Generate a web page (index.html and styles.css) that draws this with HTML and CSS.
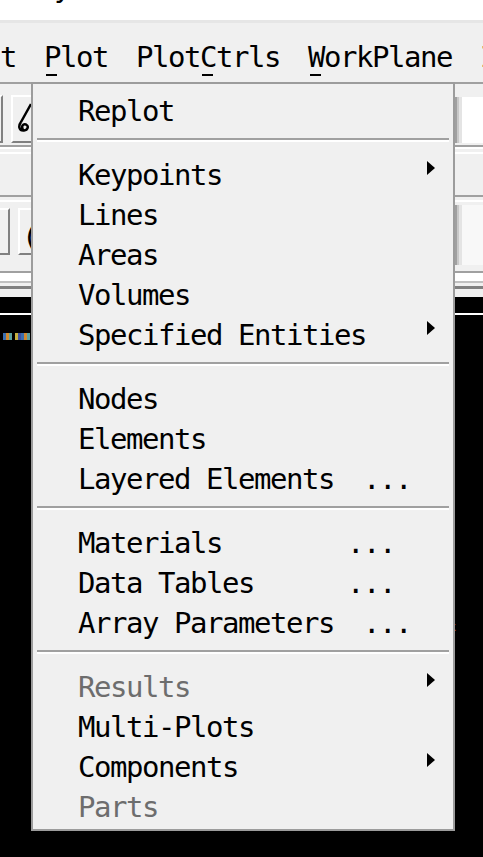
FILE: index.html
```html
<!DOCTYPE html>
<html>
<head>
<meta charset="utf-8">
<link rel="stylesheet" href="styles.css">
</head>
<body>
<div class="title"><div class="title-text">Utility</div></div>
<div class="band"></div>
<div class="menubar">
  <span class="mitem">t</span>
  <span class="mitem"><span class="ul">P</span>lot</span>
  <span class="mitem">Plot<span class="ul">C</span>trls</span>
  <span class="mitem"><span class="ul">W</span>orkPlane</span>
  <span class="mitem">I</span>
</div>
<div class="tb tb1">
  <div class="tb-left">
    <div class="btn"></div>
    <div class="btn btn-icon">
      <svg width="16" height="30" viewBox="0 0 16 30"><path d="M13 1 L3 19 M3 19 C0 23 1 28 6 27.5 C10 27 11 23 8 21.5 C5 20.5 3 23 5 27" stroke="#000" stroke-width="2.5" fill="none"/></svg>
    </div>
  </div>
  <div class="field"></div>
</div>
<div class="stripes1"></div>
<div class="tb tb2">
  <div class="tb-left tb-left2">
    <div class="btn"></div>
    <div class="btn"><span class="paren">(</span></div>
  </div>
  <div class="field field2"></div>
</div>
<div class="stripes2"></div>
<div class="canvas">
  <div class="wline"></div>
  <div class="legend"></div>
  <span class="mark">x</span>
</div>

<div class="menu">
  <div class="item">Replot</div>
  <div class="sep"></div>
  <div class="item">Keypoints<span class="arrow"></span></div>
  <div class="item">Lines</div>
  <div class="item">Areas</div>
  <div class="item">Volumes</div>
  <div class="item">Specified Entities<span class="arrow"></span></div>
  <div class="sep"></div>
  <div class="item">Nodes</div>
  <div class="item">Elements</div>
  <div class="item">Layered Elements  <span class="dots">...</span></div>
  <div class="sep"></div>
  <div class="item">Materials        <span class="dots">...</span></div>
  <div class="item">Data Tables      <span class="dots">...</span></div>
  <div class="item">Array Parameters  <span class="dots">...</span></div>
  <div class="sep"></div>
  <div class="item dis">Results<span class="arrow"></span></div>
  <div class="item">Multi-Plots</div>
  <div class="item">Components<span class="arrow"></span></div>
  <div class="item dis">Parts</div>
</div>
</body>
</html>
```

FILE: styles.css
```css
html, body {
  margin: 0;
}
body {
  width: 483px;
  height: 857px;
  overflow: hidden;
  position: relative;
  background: #f0f0f0;
  font-family: "DejaVu Sans Mono", "Liberation Mono", monospace;
  font-size: 29px;
  letter-spacing: -1.46px;
  color: #000;
}

.title {
  height: 20px;
  background: #fff;
  overflow: hidden;
}
.title-text {
  margin-top: -28px;
  margin-left: -42px;
  line-height: 30px;
  white-space: pre;
}
.band {
  height: 3px;
  background: #e6e6e6;
}

.menubar {
  height: 59px;
  box-sizing: border-box;
  padding-top: 14px;
  display: flex;
  white-space: pre;
  line-height: 40px;
  margin-left: -14px;
  background: #f0f0f0;
}
.mitem {
  padding: 0 14px;
}
.ul {
  padding-bottom: 2px;
  background: linear-gradient(#000, #000) no-repeat 2px 100% / 11px 2px;
}

.tb {
  display: flex;
  justify-content: space-between;
  align-items: flex-start;
  background: #f0f0f0;
  box-sizing: border-box;
  border-top: 2px solid #a0a0a0;
  padding-top: 11px;
}
.tb1 {
  height: 63px;
}
.tb-left {
  display: flex;
  gap: 8px;
  margin-left: -40px;
}
.tb-left2 {
  margin-left: -33px;
}
.btn {
  width: 43px;
  height: 48px;
  box-sizing: border-box;
  border: 2px solid;
  border-color: #fff #808080 #808080 #fff;
  background: #f0f0f0;
}
.btn-icon {
  padding: 6px 0 0 5px;
}
.btn-icon svg {
  display: block;
}
.field {
  width: 28px;
  height: 46px;
  margin-top: 2px;
  background: linear-gradient(to right, #a0a0a0 0 2px, #c8c8c8 2px 4px, #e4e4e4 4px 7px, #fff 7px);
}

.stripes1 {
  height: 50px;
  background: linear-gradient(to bottom, #a0a0a0 0 2px, #fff 2px 4px, #f0f0f0 4px 7px, #fff 7px 9px, #f0f0f0 9px);
}

.tb2 {
  height: 76px;
  background: linear-gradient(to bottom, #f0f0f0 0 3px, #fff 3px 5px, #f0f0f0 5px);
}
.tb2 .btn {
  height: 47px;
}
.paren {
  display: block;
  line-height: 40px;
  padding: 7px 0 0 2px;
}
.field2 {
  height: 60px;
  margin-top: -3px;
  background: linear-gradient(to right, #a0a0a0 0 2px, #c8c8c8 2px 4px, #e4e4e4 4px 7px, #f8f8f8 7px);
}

.stripes2 {
  height: 26px;
  background: linear-gradient(to bottom, #a0a0a0 0 2px, #fff 2px 10px, #c0c0c0 10px 12px, #f0f0f0 12px 15px, #808080 15px 18px, #f0f0f0 18px);
}

.canvas {
  height: 560px;
  box-sizing: border-box;
  padding-top: 16px;
  background: #000;
  position: relative;
}
.wline {
  height: 2px;
  background: #fff;
}
.legend {
  margin: 18px 0 0 3px;
  width: 40px;
  height: 7px;
  background: repeating-linear-gradient(to right, #3a6fb0 0 3px, #d08a30 3px 6px, #5aa0a0 6px 9px, #000 9px 12px, #c8b040 12px 15px, #4050a0 15px 18px);
}
.mark {
  position: absolute;
  left: 449px;
  top: 323px;
  font-size: 12px;
  letter-spacing: 0;
  color: #b06030;
}

.menu {
  position: absolute;
  left: 31px;
  top: 82px;
  width: 424px;
  height: 749px;
  box-sizing: border-box;
  border: 2px solid #9c9c9c;
  background: #f0f0f0;
  padding-top: 7px;
}
.item {
  display: flex;
  height: 40px;
  line-height: 40px;
  padding-left: 45px;
  white-space: pre;
}
.arrow {
  margin: 6px 18px 0 auto;
  width: 0;
  height: 0;
  border-left: 8px solid #000;
  border-top: 7px solid transparent;
  border-bottom: 7px solid transparent;
}
.sep {
  margin: 7px 4px 13px;
  height: 2px;
  background: #a0a0a0;
  border-bottom: 2px solid #fff;
}
.dis {
  color: #6d6d6d;
}
.dots {
  margin-left: -3px;
}
```
